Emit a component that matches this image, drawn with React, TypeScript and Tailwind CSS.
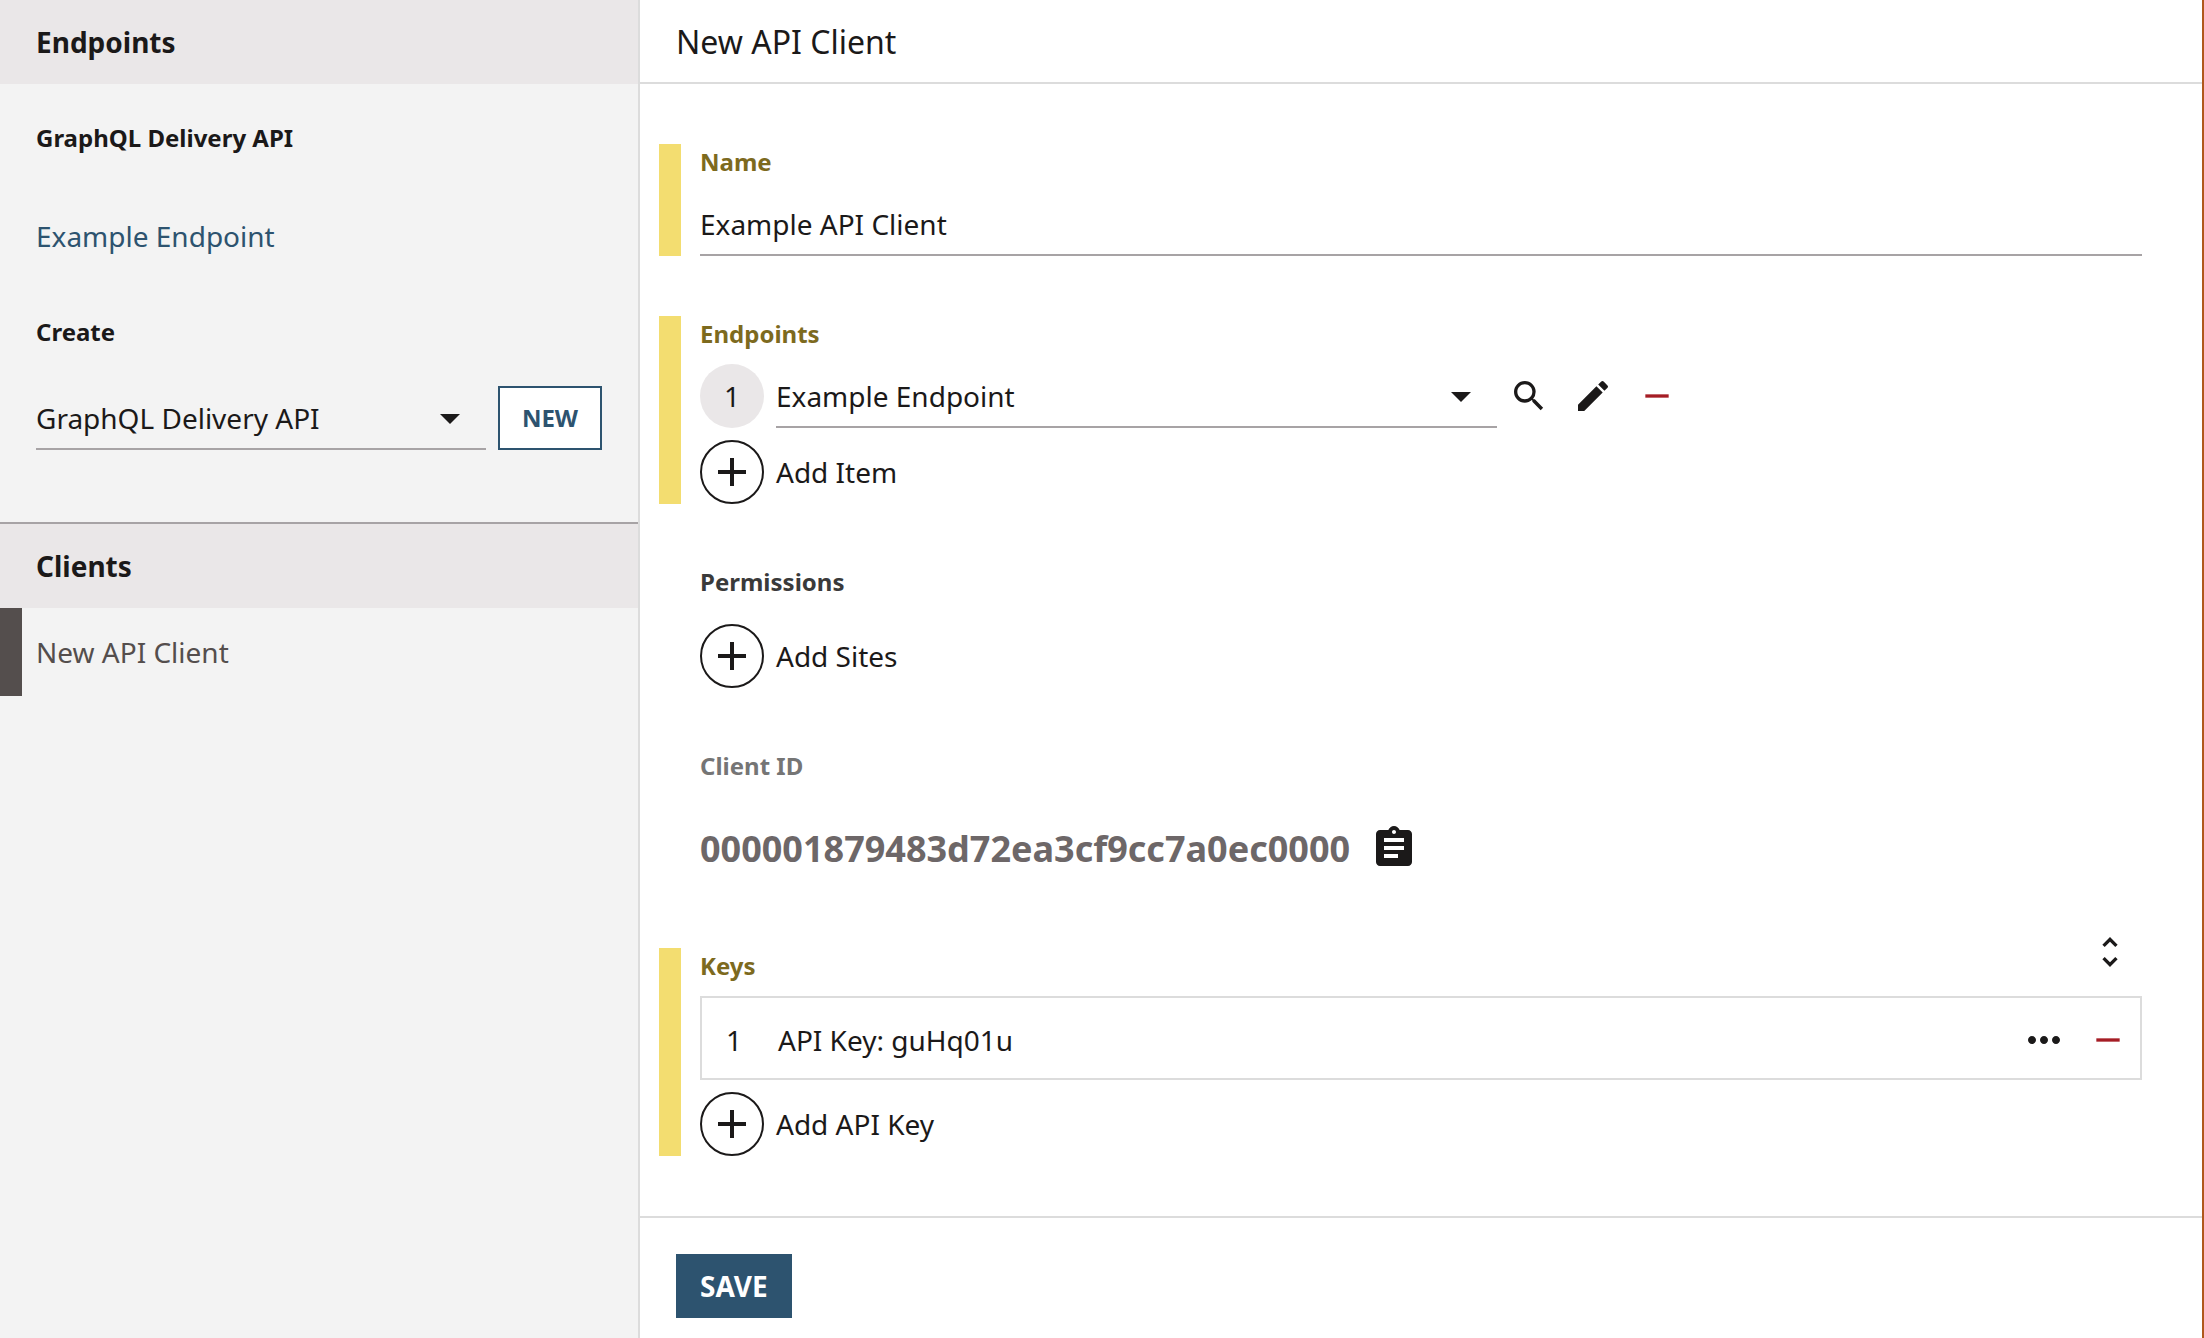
import type { ReactNode } from "react";

function Icon({ d, className }: { d: string; className: string }) {
  return (
    <svg viewBox="0 0 24 24" fill="currentColor" aria-hidden="true" className={className}>
      <path d={d} />
    </svg>
  );
}

const icons = {
  arrow: "M7 10l5 5 5-5z",
  plus: "M19 13h-6v6h-2v-6H5v-2h6V5h2v6h6v2z",
  minus: "M19 13H5v-2h14v2z",
  edit: "M3 17.25V21h3.75L17.81 9.94l-3.75-3.75L3 17.25zM20.71 7.04a.996.996 0 0 0 0-1.41l-2.34-2.34a.996.996 0 0 0-1.41 0l-1.83 1.83 3.75 3.75 1.83-1.83z",
  search:
    "M15.5 14h-.79l-.28-.27A6.471 6.471 0 0 0 16 9.5 6.5 6.5 0 1 0 9.5 16c1.61 0 3.09-.59 4.23-1.57l.27.28v.79l5 4.99L20.49 19l-4.99-5zm-6 0C7.01 14 5 11.99 5 9.5S7.01 5 9.5 5 14 7.01 14 9.5 11.99 14 9.5 14z",
  clipboard:
    "M19 3h-4.18C14.4 1.84 13.3 1 12 1c-1.3 0-2.4.84-2.82 2H5c-1.1 0-2 .9-2 2v14c0 1.1.9 2 2 2h14c1.1 0 2-.9 2-2V5c0-1.1-.9-2-2-2zm-7 0c.55 0 1 .45 1 1s-.45 1-1 1-1-.45-1-1 .45-1 1-1zm2 14H7v-2h7v2zm3-4H7v-2h10v2zm0-4H7V7h10v2z",
  unfold:
    "M12 5.83L15.17 9l1.41-1.41L12 3 7.41 7.59 8.83 9 12 5.83zm0 12.34L8.83 15l-1.41 1.41L12 21l4.59-4.59L15.17 15 12 18.17z",
  dots: "M6 10c-1.1 0-2 .9-2 2s.9 2 2 2 2-.9 2-2-.9-2-2-2zm12 0c-1.1 0-2 .9-2 2s.9 2 2 2 2-.9 2-2-.9-2-2-2zm-6 0c-1.1 0-2 .9-2 2s.9 2 2 2 2-.9 2-2-.9-2-2-2z",
};

function Select({ label, value, className }: { label: string; value: string; className: string }) {
  return (
    <div className={`relative ${className}`}>
      <select
        aria-label={label}
        defaultValue={value}
        className="h-16 w-full appearance-none border-b-2 border-[#a7a3a5] bg-transparent pt-0.5 pr-16"
      >
        <option>{value}</option>
      </select>
      <Icon d={icons.arrow} className="pointer-events-none absolute top-2 right-3 size-12" />
    </div>
  );
}

function IconButton({ label, d, className = "", size = "size-10" }: { label: string; d: string; className?: string; size?: string }) {
  return (
    <button type="button" aria-label={label} className={`flex size-16 shrink-0 items-center justify-center ${className}`}>
      <Icon d={d} className={size} />
    </button>
  );
}

function AddButton({ children }: { children: ReactNode }) {
  return (
    <button type="button" className="flex items-center gap-3">
      <span className="flex size-16 items-center justify-center rounded-full border-2 border-[#1b1919]">
        <Icon d={icons.plus} className="size-12" />
      </span>
      {children}
    </button>
  );
}

function Field({ changed = false, children }: { changed?: boolean; children: ReactNode }) {
  return (
    <div className="flex gap-[19px]">
      <div className={`w-[22px] shrink-0 ${changed ? "bg-[#f3dd70]" : ""}`} />
      <div className="min-w-0 flex-1">{children}</div>
    </div>
  );
}

const fieldLabel = "block text-2xl leading-9 font-bold";

export default function App() {
  return (
    <div className="flex min-h-screen border-r-2 border-[#b0581c] bg-white font-['Noto_Sans',sans-serif] text-[28px] leading-10 text-[#1b1919]">
      <aside className="w-160 shrink-0 border-r-2 border-[#dcdcdc] bg-[#f3f3f3]">
        <section className="border-b-2 border-[#a7a3a5]">
          <h2 className="flex h-21 items-center bg-[#eae7e8] px-9 font-bold">Endpoints</h2>
          <h3 className="px-9 py-9 text-2xl leading-9 font-bold">GraphQL Delivery API</h3>
          <a href="#endpoint" className="flex h-22 items-center px-9 text-[#2d536f]">
            Example Endpoint
          </a>
          <h3 className="px-9 pt-[34px] pb-9 text-2xl leading-9 font-bold">Create</h3>
          <div className="flex gap-3 px-9 pb-18">
            <Select label="Endpoint type" value="GraphQL Delivery API" className="flex-1" />
            <button
              type="button"
              className="h-16 w-26 border-2 border-[#2d536f] bg-white text-2xl font-bold text-[#2d536f]"
            >
              NEW
            </button>
          </div>
        </section>
        <section>
          <h2 className="flex h-21 items-center bg-[#eae7e8] px-9 font-bold">Clients</h2>
          <a
            href="#client"
            aria-current="page"
            className="flex h-22 items-center border-l-[22px] border-[#544e4d] pl-3.5 text-[#544e4d]"
          >
            New API Client
          </a>
        </section>
      </aside>

      <main className="min-w-0 flex-1">
        <h1 className="flex h-21 items-center border-b-2 border-[#dcdcdc] px-9 pt-0.5 text-[32px]">New API Client</h1>

        <form onSubmit={(e) => e.preventDefault()}>
          <div className="flex flex-col gap-15 py-15 pr-15 pl-[19px]">
            <Field changed>
              <label htmlFor="name" className={`${fieldLabel} mb-3 text-[#7d6a1e]`}>
                Name
              </label>
              <input
                id="name"
                type="text"
                defaultValue="Example API Client"
                className="block h-16 w-full border-b-2 border-[#a7a3a5] bg-transparent pt-0.5"
              />
            </Field>

            <Field changed>
              <h2 className={`${fieldLabel} mb-3 text-[#7d6a1e]`}>Endpoints</h2>
              <div className="mb-3 flex">
                <span className="mr-3 flex size-16 shrink-0 items-center justify-center rounded-full bg-[#eae7e8]">1</span>
                <Select label="Endpoint 1" value="Example Endpoint" className="w-1/2" />
                <IconButton label="Search" d={icons.search} />
                <IconButton label="Edit" d={icons.edit} />
                <IconButton label="Remove" d={icons.minus} className="text-[#a51d25]" />
              </div>
              <AddButton>Add Item</AddButton>
            </Field>

            <Field>
              <h2 className={`${fieldLabel} mb-6 text-[#3a3a3a]`}>Permissions</h2>
              <AddButton>Add Sites</AddButton>
            </Field>

            <Field>
              <h2 className={`${fieldLabel} mb-6 text-[#757575]`}>Client ID</h2>
              <div className="flex h-20 items-center gap-3">
                <span className="pt-0.5 text-4xl font-bold text-[#6d6768]">000001879483d72ea3cf9cc7a0ec0000</span>
                <IconButton label="Copy client ID" d={icons.clipboard} size="size-12" />
              </div>
            </Field>

            <Field changed>
              <div className="flex h-12 items-start justify-between">
                <h2 className={`${fieldLabel} text-[#7d6a1e]`}>Keys</h2>
                <IconButton label="Expand all" d={icons.unfold} className="-mt-7" />
              </div>
              <div className="mb-3 flex items-center border-2 border-[#dcdcdc] pt-2.5 pb-1.5">
                <span className="mr-3 w-16 text-center">1</span>
                <span className="flex-1">API Key: guHq01u</span>
                <IconButton label="More actions" d={icons.dots} size="size-12" />
                <IconButton label="Remove key" d={icons.minus} className="text-[#a51d25]" />
              </div>
              <AddButton>Add API Key</AddButton>
            </Field>
          </div>

          <footer className="border-t-2 border-[#dcdcdc] px-9 pt-9 pb-5">
            <button type="submit" className="h-16 bg-[#2d536f] px-6 font-bold text-white">
              SAVE
            </button>
          </footer>
        </form>
      </main>
    </div>
  );
}
